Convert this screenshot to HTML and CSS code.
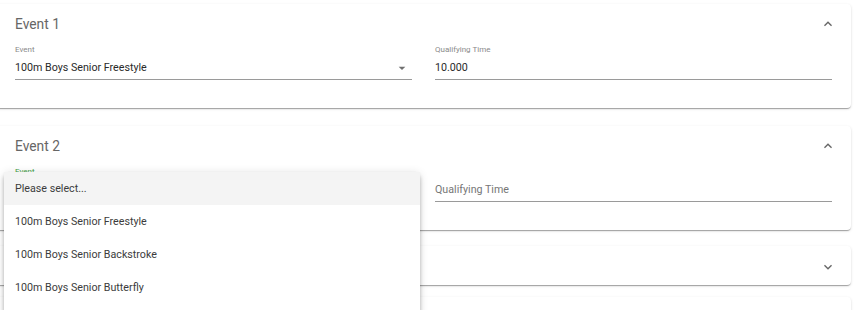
FILE: index.html
```html
<!DOCTYPE html>
<html lang="en">
<head>
<meta charset="UTF-8">
<meta name="viewport" content="width=device-width, initial-scale=1.0">
<title>Events</title>
<link rel="stylesheet" href="styles.css">
</head>
<body>
<div class="panels">

<div class="panel">
<div class="panel-header">
<span class="panel-title">Event 1</span>
<svg class="chevron" width="16" height="16" viewBox="0 0 24 24"><path d="M7.41 15.41L12 10.83l4.59 4.58L18 14l-6-6-6 6z"/></svg>
</div>
<div class="panel-body">
<div class="field">
<span class="field-label">Event</span>
<div class="field-input">
<span class="value">100m Boys Senior Freestyle</span>
<svg class="arrow" width="16" height="16" viewBox="0 0 24 24"><path d="M7 10l5 5 5-5z"/></svg>
</div>
</div>
<div class="field">
<span class="field-label">Qualifying Time</span>
<div class="field-input">
<span class="value">10.000</span>
</div>
</div>
</div>
</div>

<div class="panel">
<div class="panel-header">
<span class="panel-title">Event 2</span>
<svg class="chevron" width="16" height="16" viewBox="0 0 24 24"><path d="M7.41 15.41L12 10.83l4.59 4.58L18 14l-6-6-6 6z"/></svg>
</div>
<div class="panel-body">
<div class="field open">
<span class="field-label focused">Event</span>
<div class="field-input"></div>
<ul class="menu">
<li class="selected">Please select...</li>
<li>100m Boys Senior Freestyle</li>
<li>100m Boys Senior Backstroke</li>
<li>100m Boys Senior Butterfly</li>
</ul>
</div>
<div class="field">
<span class="field-label"></span>
<div class="field-input">
<span class="placeholder">Qualifying Time</span>
</div>
</div>
</div>
</div>

<div class="panel collapsed">
<div class="panel-header">
<span class="panel-title">Event 3</span>
<svg class="chevron" width="16" height="16" viewBox="0 0 24 24"><path d="M7.41 8.59L12 13.17l4.59-4.58L18 10l-6 6-6-6z"/></svg>
</div>
</div>

<div class="panel collapsed"></div>

</div>
</body>
</html>
```

FILE: styles.css
```css
body {
font-family: Roboto, "Noto Sans", sans-serif;
margin: 0;
padding: 0;
background-color: #fff;
overflow: hidden;
}

.panels {
display: flex;
flex-direction: column;
gap: 18px;
padding: 4px 3px 0 0;
margin-left: -4px;
}

.panel {
background-color: #fff;
border-radius: 4px;
box-shadow: 0 2px 1px -1px rgba(0, 0, 0, 0.2), 0 1px 1px 0 rgba(0, 0, 0, 0.14), 0 1px 3px 0 rgba(0, 0, 0, 0.12);
height: 104px;
}

.panel.collapsed {
height: 39px;
margin-top: -2px;
}

.panel.collapsed + .panel.collapsed {
margin-top: -6px;
}

.panel-header {
height: 40px;
display: flex;
align-items: center;
justify-content: space-between;
padding: 0 15px 0 19px;
}

.panel.collapsed .panel-header {
height: 42px;
}

.panel-title {
font-size: 13.8px;
color: #666;
}

.chevron {
fill: #666;
}

.panel-body {
display: grid;
grid-template-columns: 1fr 1fr;
gap: 23px;
padding: 0 19px 0 19px;
}

.field {
position: relative;
}

.field-label {
display: block;
height: 12px;
line-height: 12px;
font-size: 8px;
color: #8a8a8a;
}

.field-label.focused {
color: #43a047;
}

.field-input {
height: 23px;
display: flex;
align-items: center;
justify-content: space-between;
border-bottom: 1px solid #9a9a9a;
font-size: 10.7px;
}

.value {
color: #2a2a2a;
}

.placeholder {
color: #767676;
}

.arrow {
fill: #707070;
margin-right: 2px;
}

/* dropdown list */
.menu {
position: absolute;
top: 6px;
left: -11px;
right: -8px;
margin: 0;
padding: 0 0 14px 0;
list-style: none;
background-color: #fff;
border-radius: 4px;
box-shadow: 0 2px 4px -1px rgba(0, 0, 0, 0.2), 0 4px 5px 0 rgba(0, 0, 0, 0.14), 0 1px 10px 0 rgba(0, 0, 0, 0.12);
z-index: 5;
}

.menu li {
height: 33px;
line-height: 33px;
padding-left: 11px;
font-size: 10.7px;
color: #3c3c3c;
}

.menu li.selected {
background-color: #f4f4f4;
}
```
